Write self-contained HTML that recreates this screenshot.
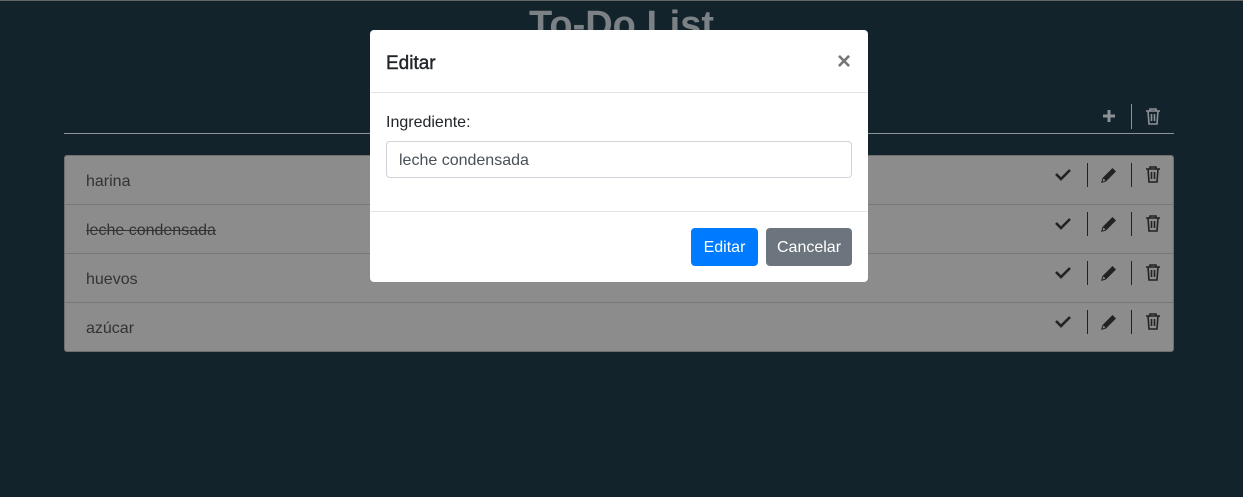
<!DOCTYPE html>
<html><head><style>
body{margin:0;width:1243px;height:497px;background:#12232b;font-family:"Liberation Sans",sans-serif;position:relative;overflow:hidden}
.topl{position:absolute;left:0;top:0;width:1243px;height:1px;background:#666}
.title{position:absolute;left:0;width:1243px;top:4px;text-align:center;font-size:38px;font-weight:bold;color:#7b8185}
.hr{position:absolute;left:64px;top:133px;width:1110px;height:1px;background:#8c9296}
.card{position:absolute;left:64px;top:155px;width:1108px;height:195px;border:1px solid #6f6f6f;border-radius:3px;background:#8c8c8c}
.row{height:48px;border-bottom:1px solid #777;position:relative;font-size:16px;color:#333}
.row:last-child{border:none}
.row span{position:absolute;left:21px;top:17px}
.modal{position:absolute;left:370px;top:30px;width:498px;height:252px;background:#fff;border-radius:4px}
.mh{height:62px;border-bottom:1px solid #e5e5e5;position:relative}
.mh b{position:absolute;left:16px;top:23px;font-size:19px;color:#212529;font-weight:normal;-webkit-text-stroke:0.4px #212529}
.x{position:absolute;right:17px;top:18px;font-size:24px;color:#777;font-weight:bold}
.lbl{position:absolute;left:16px;top:84px;font-size:16px;color:#212529}
.inp{position:absolute;left:16px;top:111px;width:466px;height:37px;border:1px solid #ced4da;border-radius:4px;box-sizing:border-box;padding:10px 12px 0;font-size:16px;color:#495057}
.mf{position:absolute;left:0;top:181px;width:498px;border-top:1px solid #e5e5e5}
.btn{position:absolute;top:198px;height:38px;border-radius:4px;color:#fff;font-size:16px;line-height:40px;text-align:center}
</style></head><body>
<div class="topl"></div>
<div class="title">To-Do List</div>
<svg style="position:absolute;left:1101px;top:108px" width="16" height="16"><path d="M8 2v12M2 8h12" stroke="#8c9296" stroke-width="3"/></svg>
<div style="position:absolute;left:1131px;top:104px;width:1px;height:25px;background:#8c9296"></div>
<svg style="position:absolute;left:1145px;top:107px" width="16" height="18"><g fill="none" stroke="#8c9296" stroke-width="1.6"><path d="M1 4h14M5 4V2h6v2M3 4l1 13h8l1-13M6.5 7v7M9.5 7v7"/></g></svg>
<div class="hr"></div>
<div class="card">
<div class="row"><span>harina</span></div>
<div class="row"><span style="text-decoration:line-through">leche condensada</span></div>
<div class="row"><span>huevos</span></div>
<div class="row"><span>azúcar</span></div>
</div>
<div class="modal">
<div class="mh"><b>Editar</b><span class="x">×</span></div>
<div class="lbl">Ingrediente:</div>
<div class="inp">leche condensada</div>
<div class="mf"></div>
<div class="btn" style="left:321px;width:67px;background:#007bff">Editar</div>
<div class="btn" style="left:396px;width:86px;background:#6c757d">Cancelar</div>
</div>
<svg style="position:absolute;left:0;top:0" width="1243" height="497">
<defs>
<g id="r">
<path d="M1056 174l5 5 9-9" fill="none" stroke="#222" stroke-width="2.6"/>
<rect x="1087" y="163" width="1" height="24" fill="#222"/>
<path d="M1101 183l1.5-5 10-10 3.5 3.5-10 10z" fill="#222"/><path d="M1102.5 181.5l1-3 2 2z" fill="#8c8c8c"/>
<rect x="1131" y="163" width="1" height="24" fill="#222"/>
<g fill="none" stroke="#222" stroke-width="1.6"><path d="M1146 169h14M1150 169v-2h6v2M1148 169l1 13h8l1-13M1151.5 172v7M1154.5 172v7"/></g>
</g></defs>
<use href="#r"/><use href="#r" y="49"/><use href="#r" y="98"/><use href="#r" y="147"/>
</svg>
</body></html>
